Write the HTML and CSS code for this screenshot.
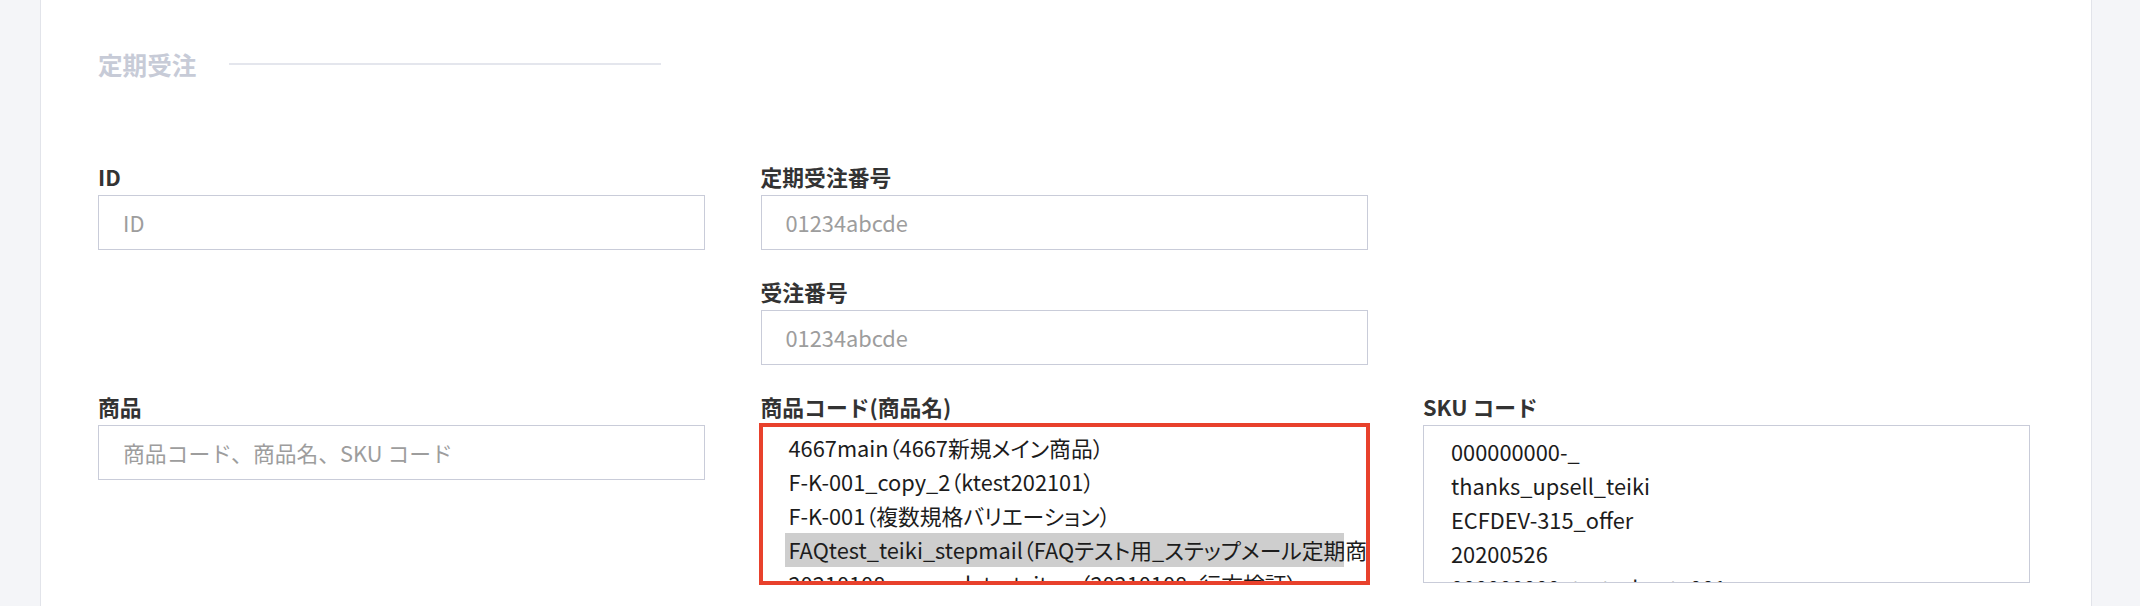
FILE: index.html
```html
<!DOCTYPE html>
<html lang="ja">
<head>
    <meta charset="UTF-8">
    <title>定期受注</title>
    <link rel="stylesheet" href="styles.css">
</head>
<body>
    <div class="card">
        <div class="section-title">
            <h2>定期受注</h2>
            <span class="rule"></span>
        </div>

        <div class="form-grid">
            <div class="field">
                <label>ID</label>
                <input type="text" placeholder="ID">
            </div>
            <div class="field">
                <label>定期受注番号</label>
                <input type="text" placeholder="01234abcde">
            </div>
            <div class="blank"></div>

            <div class="blank"></div>
            <div class="field">
                <label>受注番号</label>
                <input type="text" placeholder="01234abcde">
            </div>
            <div class="blank"></div>

            <div class="field">
                <label>商品</label>
                <input type="text" placeholder="商品コード、商品名、SKU コード">
            </div>
            <div class="field">
                <label>商品コード(商品名)</label>
                <div class="list marked">
                    <div class="opt">4667main（4667新規メイン商品）</div>
                    <div class="opt">F-K-001_copy_2（ktest202101）</div>
                    <div class="opt">F-K-001（複数規格バリエーション）</div>
                    <div class="opt selected">FAQtest_teiki_stepmail（FAQテスト用_ステップメール定期商品）</div>
                    <div class="opt">20210108_normal_test_item（20210108_行方検証）</div>
                </div>
            </div>
            <div class="field">
                <label>SKU コード</label>
                <div class="list sku">
                    <div class="opt">000000000-_</div>
                    <div class="opt">thanks_upsell_teiki</div>
                    <div class="opt">ECFDEV-315_offer</div>
                    <div class="opt">20200526</div>
                    <div class="opt">000000000_test_sku_t_001</div>
                </div>
            </div>
        </div>
    </div>
</body>
</html>
```

FILE: styles.css
```css
*{
    margin: 0;
    padding: 0;
    box-sizing: border-box;
}
body{
    width: 100%;
    height: 100vh;
    background: #f4f5f8;
    padding: 0 48px 0 40px;
    font-family: "Noto Sans CJK JP", "Noto Sans", sans-serif;
    color: #333;
    overflow: hidden;
}
.card{
    background: #fff;
    border-left: 1px solid #e2e4ea;
    border-right: 1px solid #e2e4ea;
    min-height: 606px;
    padding: 46px 59px 0 57px;
}
.section-title{
    display: flex;
    align-items: center;
    height: 36px;
}
.section-title h2{
    font-size: 24.6px;
    line-height: 36px;
    font-weight: 700;
    color: #c7cbd7;
}
.section-title .rule{
    display: block;
    width: 432px;
    height: 2px;
    margin-left: 33px;
    background: #e4e6ed;
}
.form-grid{
    display: grid;
    grid-template-columns: repeat(3, 607px);
    column-gap: 55.5px;
    margin-top: 79.5px;
}
.field{
    margin-bottom: 27px;
}
.field label{
    display: block;
    font-size: 21.8px;
    line-height: 30px;
    font-weight: 700;
    color: #333;
    margin-bottom: 3px;
}
.field input{
    display: block;
    width: 100%;
    height: 55px;
    border: 1.5px solid #c9ccd9;
    padding: 0 24px;
    font-family: inherit;
    font-size: 21.8px;
    color: #333;
    outline: none;
    background: #fff;
}
.field input::placeholder{
    color: #9d9d9d;
}
.list{
    height: 158px;
    border: 1.5px solid #c9ccd9;
    padding: 5.5px 23px;
    overflow: hidden;
    background: #fff;
}
.list.sku{
    padding-top: 9.5px;
}
.list.marked{
    outline: 4.5px solid #e8412c;
    outline-offset: -2px;
}
.opt{
    font-size: 21.8px;
    line-height: 34px;
    padding: 0 4px;
    white-space: nowrap;
    color: #1c1c1c;
    font-feature-settings: "palt";
}
.opt.selected{
    background: #cecece;
}
```
